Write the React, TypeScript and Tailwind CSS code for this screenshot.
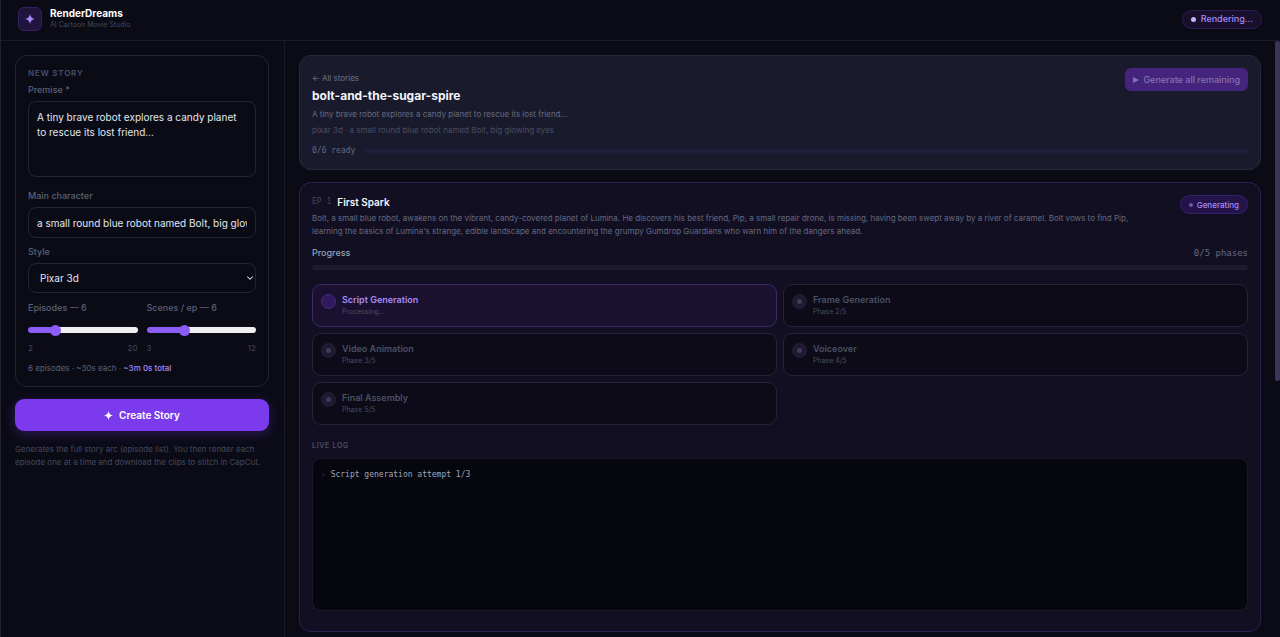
import { useState } from "react";
import { ChevronDown } from "lucide-react";

interface Phase {
  name: string;
  note: string;
  active?: boolean;
}

const phases: Phase[] = [
  { name: "Script Generation", note: "Processing…", active: true },
  { name: "Frame Generation", note: "Phase 2/5" },
  { name: "Video Animation", note: "Phase 3/5" },
  { name: "Voiceover", note: "Phase 4/5" },
  { name: "Final Assembly", note: "Phase 5/5" },
];

const Sparkle: React.FC<{ className: string }> = ({ className }) => (
  <svg viewBox="0 0 10 10" className={className} aria-hidden="true">
    <path
      d="M5 0C5.5 3 7 4.5 10 5C7 5.5 5.5 7 5 10C4.5 7 3 5.5 0 5C3 4.5 4.5 3 5 0Z"
      fill="currentColor"
    />
  </svg>
);

interface SliderProps {
  id: string;
  label: string;
  min: number;
  max: number;
  value: number;
  onChange: (value: number) => void;
}

const Slider: React.FC<SliderProps> = ({
  id,
  label,
  min,
  max,
  value,
  onChange,
}) => {
  const percent = ((value - min) / (max - min)) * 100;

  return (
    <div className="min-w-0 flex-1">
      <label
        htmlFor={id}
        className="block text-[9px] leading-[14px] font-medium text-[#5a6178]"
      >
        {label} — {value}
      </label>
      <input
        id={id}
        type="range"
        min={min}
        max={max}
        value={value}
        onChange={(e) => onChange(Number(e.target.value))}
        className="mt-3 block h-1.5 w-full cursor-pointer appearance-none rounded-full [&::-webkit-slider-thumb]:h-[11px] [&::-webkit-slider-thumb]:w-[11px] [&::-webkit-slider-thumb]:appearance-none [&::-webkit-slider-thumb]:rounded-full [&::-webkit-slider-thumb]:bg-[#8b5cf6]"
        style={{
          backgroundImage: `linear-gradient(to right, #8b5cf6 ${percent}%, #efefef ${percent}%)`,
        }}
      />
      <div className="mt-2 flex justify-between text-[8px] leading-[14px] text-[#42485c]">
        <span>{min}</span>
        <span>{max}</span>
      </div>
    </div>
  );
};

const PhaseCard: React.FC<{ phase: Phase }> = ({ phase }) => {
  return (
    <li
      className={`flex gap-1.5 rounded-[9px] border px-2 py-2 ${
        phase.active
          ? "border-[#3d2a66] bg-[#1a1130]"
          : "border-[#252239] bg-[#0c0b17]"
      }`}
    >
      <span
        className={`mt-px flex h-[15px] w-[15px] shrink-0 items-center justify-center rounded-full border ${
          phase.active
            ? "border-[#45297d] bg-[#32195f]"
            : "border-[#252039] bg-[#1e1a31]"
        }`}
      >
        {!phase.active && (
          <span className="h-[5px] w-[5px] rounded-full bg-[#3f3a56]" />
        )}
      </span>
      <div>
        <h3
          className={`text-[9px] leading-[13px] font-semibold ${
            phase.active ? "text-[#a78bfa]" : "text-[#4a5066]"
          }`}
        >
          {phase.name}
        </h3>
        <p className="text-[7px] leading-[12px] text-[#474d62]">
          {phase.note}
        </p>
      </div>
    </li>
  );
};

const Sidebar: React.FC = () => {
  const [episodes, setEpisodes] = useState(6);
  const [scenes, setScenes] = useState(6);
  const seconds = episodes * 30;

  return (
    <aside className="w-[284px] shrink-0 border-r border-[#1a1929] p-3.5 pr-[15px]">
      <form onSubmit={(e) => e.preventDefault()}>
        <section className="rounded-xl border border-[#252436] p-3">
          <h2 className="text-[8px] leading-[10px] font-semibold tracking-widest text-[#475069] uppercase">
            New Story
          </h2>
          <label
            htmlFor="premise"
            className="mt-[5px] block text-[9px] leading-[14px] font-medium text-[#5a6178]"
          >
            Premise *
          </label>
          <textarea
            id="premise"
            defaultValue="A tiny brave robot explores a candy planet to rescue its lost friend…"
            className="mt-1 block h-[76px] w-full resize-none rounded-lg border border-[#252436] bg-transparent px-2 py-2 text-[10px] leading-[15px] text-[#e2e8f0] outline-none"
          />
          <label
            htmlFor="character"
            className="mt-3 block text-[9px] leading-[14px] font-medium text-[#5a6178]"
          >
            Main character
          </label>
          <input
            id="character"
            type="text"
            defaultValue="a small round blue robot named Bolt, big glowing eyes"
            className="mt-1 block h-[31px] w-full rounded-lg border border-[#252436] bg-transparent px-2 text-[10px] text-[#e2e8f0] outline-none"
          />
          <label
            htmlFor="style"
            className="mt-[7px] block text-[9px] leading-[14px] font-medium text-[#5a6178]"
          >
            Style
          </label>
          <div className="relative mt-1">
            <select
              id="style"
              className="block h-[30px] w-full appearance-none rounded-lg border border-[#252436] bg-transparent px-[11px] text-[10px] text-[#e2e8f0] outline-none"
            >
              <option>Pixar 3d</option>
            </select>
            <ChevronDown
              className="pointer-events-none absolute top-2.5 right-px h-2.5 w-2.5 text-[#e2e8f0]"
              strokeWidth={2.5}
            />
          </div>
          <div className="mt-2 flex gap-[9px]">
            <Slider
              id="episodes"
              label="Episodes"
              min={2}
              max={20}
              value={episodes}
              onChange={setEpisodes}
            />
            <Slider
              id="scenes"
              label="Scenes / ep"
              min={3}
              max={12}
              value={scenes}
              onChange={setScenes}
            />
          </div>
          <p className="mt-[7px] text-[8px] leading-[12px] text-[#5a6178]">
            {episodes} episodes · ~30s each ·{" "}
            <span className="font-medium text-[#a78bfa]">
              ~{Math.floor(seconds / 60)}m {seconds % 60}s total
            </span>
          </p>
        </section>
        <button
          type="submit"
          className="mt-3 flex h-8 w-full items-center justify-center gap-1.5 rounded-[9px] bg-[#7c3aed] text-[10px] font-semibold text-white shadow-[0_3px_12px_rgba(124,58,237,0.3)]"
        >
          <Sparkle className="h-[9px] w-[9px]" />
          Create Story
        </button>
      </form>
      <p className="mt-3 text-[8px] leading-[13px] text-[#42485c]">
        Generates the full story arc (episode list). You then render each
        episode one at a time and download the clips to stitch in CapCut.
      </p>
    </aside>
  );
};

const StoryHeader: React.FC = () => {
  return (
    <section className="rounded-xl border border-[#29283d] bg-[#1a1a2d] p-3">
      <div className="flex items-start justify-between">
        <div>
          <a href="#stories" className="block text-[8px] leading-5 text-[#6a7187]">
            ← All stories
          </a>
          <h1 className="text-[12px] leading-4 font-bold text-[#f1f5f9]">
            bolt-and-the-sugar-spire
          </h1>
          <p className="mt-1 text-[8px] leading-3 text-[#626a80]">
            A tiny brave robot explores a candy planet to rescue its lost
            friend…
          </p>
          <p className="mt-1 text-[8px] leading-3 text-[#474d62]">
            pixar 3d · a small round blue robot named Bolt, big glowing eyes
          </p>
        </div>
        <button
          type="button"
          disabled
          className="flex h-[23px] items-center gap-1 rounded-md bg-[#44247d] px-2 text-[9px] font-medium text-[#8872ad]"
        >
          <svg viewBox="0 0 6 6" className="h-1.5 w-1.5" aria-hidden="true">
            <path d="M0 0L6 3L0 6Z" fill="currentColor" />
          </svg>
          Generate all remaining
        </button>
      </div>
      <div className="mt-[9px] flex items-center gap-2.5">
        <span className="font-[DejaVu_Sans_Mono,monospace] text-[8px] leading-3 text-[#626a80]">
          0/6 ready
        </span>
        <div className="h-[5px] flex-1 rounded-full bg-[#1e1d3a]" />
      </div>
    </section>
  );
};

const EpisodeCard: React.FC = () => {
  return (
    <section className="mt-3 rounded-xl border border-[#2d2152] bg-[#130f23] p-3 pb-5">
      <div className="flex items-start justify-between">
        <div className="max-w-[840px]">
          <div className="flex items-center gap-1.5 leading-[14px]">
            <span className="font-[DejaVu_Sans_Mono,monospace] text-[8px] text-[#42485c]">
              EP 1
            </span>
            <h2 className="text-[10px] font-semibold text-[#f1f5f9]">
              First Spark
            </h2>
          </div>
          <p className="mt-[3px] text-[8px] leading-[13px] text-[#626a80]">
            Bolt, a small blue robot, awakens on the vibrant, candy-covered
            planet of Lumina. He discovers his best friend, Pip, a small repair
            drone, is missing, having been swept away by a river of caramel.
            Bolt vows to find Pip, learning the basics of Lumina's strange,
            edible landscape and encountering the grumpy Gumdrop Guardians who
            warn him of the dangers ahead.
          </p>
        </div>
        <span className="flex h-[19px] items-center gap-1 rounded-full border border-[#35206a] bg-[#23134a] px-2 text-[8px] font-medium text-[#a78bfa]">
          <span className="h-1 w-1 rounded-full bg-[#6f58a8]" />
          Generating
        </span>
      </div>

      <div className="mt-2 flex justify-between text-[9px] leading-[14px]">
        <span className="font-medium text-[#94a3b8]">Progress</span>
        <span className="font-[DejaVu_Sans_Mono,monospace] text-[#626a80]">
          0/5 phases
        </span>
      </div>
      <div className="mt-[5px] h-[5px] rounded-full bg-[#1e1a31]" />

      <ul className="mt-3.5 grid grid-cols-2 gap-1.5">
        {phases.map((phase) => (
          <PhaseCard key={phase.name} phase={phase} />
        ))}
      </ul>

      <h3 className="mt-[15px] text-[7px] leading-3 font-semibold tracking-widest text-[#475069] uppercase">
        Live Log
      </h3>
      <div className="mt-1.5 h-[153px] rounded-[9px] border border-[#19182a] bg-[#06060f] px-2 py-2.5 font-[DejaVu_Sans_Mono,monospace] text-[8px] leading-3 text-[#a0a6b8]">
        <span className="text-[#333848]">›</span> Script generation attempt 1/3
      </div>
    </section>
  );
};

export default function App() {
  return (
    <div className="flex h-screen flex-col overflow-hidden border-l border-[#22222e] bg-[#0b0b16] font-[Inter,sans-serif]">
      <header className="flex h-[41px] shrink-0 items-center justify-between border-b border-[#1c1b2b] pr-[18px] pb-0.5 pl-[17px]">
        <div className="flex items-center gap-2">
          <div className="flex h-6 w-6 items-center justify-center rounded-md border border-[#32215f] bg-[#20143f] text-[#a78bfa]">
            <Sparkle className="h-2.5 w-2.5" />
          </div>
          <div>
            <p className="text-[10px] leading-3 font-bold text-white">
              RenderDreams
            </p>
            <p className="text-[7px] leading-3 text-[#42485c]">
              AI Cartoon Movie Studio
            </p>
          </div>
        </div>
        <span className="flex h-[19px] items-center gap-[5px] rounded-full border border-[#2c1c54] bg-[#170f2c] px-2 text-[9px] font-medium text-[#a78bfa]">
          <span className="h-[5px] w-[5px] rounded-full bg-[#c4b5fd]" />
          Rendering…
        </span>
      </header>
      <div className="flex min-h-0 flex-1">
        <Sidebar />
        <main className="min-w-0 flex-1 overflow-hidden p-3.5">
          <StoryHeader />
          <EpisodeCard />
        </main>
        <div className="w-[5px] shrink-0">
          <div className="h-[57%] rounded-full bg-[#3b3458]" />
        </div>
      </div>
    </div>
  );
}
